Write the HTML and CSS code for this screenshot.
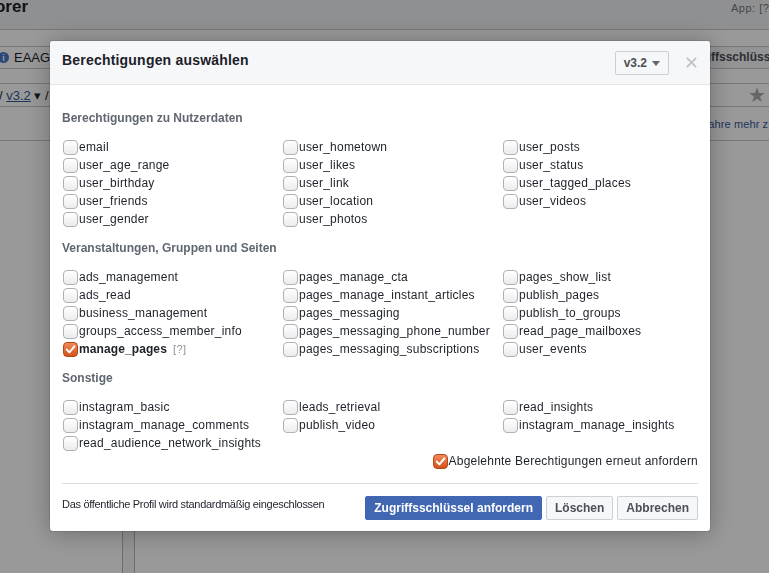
FILE: index.html
```html
<!DOCTYPE html>
<html lang="de">
<head>
<meta charset="utf-8">
<title>Graph API Explorer</title>
<link rel="stylesheet" href="styles.css">
</head>
<body>
<div class="page">
  <div class="bg-row bg-top">
    <div class="bg-brand"><span>Graph API Explorer</span></div>
    <div class="bg-app">App: [?]</div>
  </div>
  <div class="bg-row bg-r2"></div>
  <div class="bg-row bg-r3">
    <span class="bg-info">i</span>
    <span class="bg-token">EAAGmZBZCq</span>
    <span class="bg-btn">Zugriffsschlüssel anfordern</span>
  </div>
  <div class="bg-row bg-r4"></div>
  <div class="bg-row bg-r5">
    <span class="bg-path">/ <u>v3.2</u> ▾ / me?fields=id,name</span>
    <span class="bg-star">★</span>
  </div>
  <div class="bg-row bg-r6">
    <span class="bg-learn">Erfahre mehr zu Zugriffsschlüsseln</span>
  </div>
  <div class="bg-cols">
    <div class="bg-c1"></div>
    <div class="bg-c2"></div>
    <div class="bg-c3"></div>
  </div>
</div>
<div class="overlay"></div>

<div class="modal">
  <div class="m-head">
    <div class="m-title">Berechtigungen auswählen</div>
    <div class="m-ver">v3.2 <span class="caret"></span></div>
    <svg class="m-close" width="12" height="12" viewBox="0 0 12 12"><path d="M1.5 1.5 L10.5 10.5 M10.5 1.5 L1.5 10.5" stroke="#bec3c9" stroke-width="2" stroke-linecap="round"/></svg>
  </div>
  <div class="m-body">
    <div class="sec-title">Berechtigungen zu Nutzerdaten</div>
    <div class="grid">
      <div class="col">
        <div class="item"><span class="cb"></span>email</div>
        <div class="item"><span class="cb"></span>user_age_range</div>
        <div class="item"><span class="cb"></span>user_birthday</div>
        <div class="item"><span class="cb"></span>user_friends</div>
        <div class="item"><span class="cb"></span>user_gender</div>
      </div>
      <div class="col">
        <div class="item"><span class="cb"></span>user_hometown</div>
        <div class="item"><span class="cb"></span>user_likes</div>
        <div class="item"><span class="cb"></span>user_link</div>
        <div class="item"><span class="cb"></span>user_location</div>
        <div class="item"><span class="cb"></span>user_photos</div>
      </div>
      <div class="col">
        <div class="item"><span class="cb"></span>user_posts</div>
        <div class="item"><span class="cb"></span>user_status</div>
        <div class="item"><span class="cb"></span>user_tagged_places</div>
        <div class="item"><span class="cb"></span>user_videos</div>
      </div>
    </div>

    <div class="sec-title">Veranstaltungen, Gruppen und Seiten</div>
    <div class="grid">
      <div class="col">
        <div class="item"><span class="cb"></span>ads_management</div>
        <div class="item"><span class="cb"></span>ads_read</div>
        <div class="item"><span class="cb"></span>business_management</div>
        <div class="item"><span class="cb"></span>groups_access_member_info</div>
        <div class="item item-on"><span class="cb cb-on"><svg viewBox="0 0 15 15" width="15" height="15"><path d="M3.2 7.6 L6.2 10.8 L12 3.8" fill="none" stroke="#fff" stroke-width="2.3" stroke-linecap="round" stroke-linejoin="round"/></svg></span><b>manage_pages</b><span class="help">[?]</span></div>
      </div>
      <div class="col">
        <div class="item"><span class="cb"></span>pages_manage_cta</div>
        <div class="item"><span class="cb"></span>pages_manage_instant_articles</div>
        <div class="item"><span class="cb"></span>pages_messaging</div>
        <div class="item"><span class="cb"></span>pages_messaging_phone_number</div>
        <div class="item"><span class="cb"></span>pages_messaging_subscriptions</div>
      </div>
      <div class="col">
        <div class="item"><span class="cb"></span>pages_show_list</div>
        <div class="item"><span class="cb"></span>publish_pages</div>
        <div class="item"><span class="cb"></span>publish_to_groups</div>
        <div class="item"><span class="cb"></span>read_page_mailboxes</div>
        <div class="item"><span class="cb"></span>user_events</div>
      </div>
    </div>

    <div class="sec-title">Sonstige</div>
    <div class="grid">
      <div class="col">
        <div class="item"><span class="cb"></span>instagram_basic</div>
        <div class="item"><span class="cb"></span>instagram_manage_comments</div>
        <div class="item"><span class="cb"></span>read_audience_network_insights</div>
      </div>
      <div class="col">
        <div class="item"><span class="cb"></span>leads_retrieval</div>
        <div class="item"><span class="cb"></span>publish_video</div>
      </div>
      <div class="col">
        <div class="item"><span class="cb"></span>read_insights</div>
        <div class="item"><span class="cb"></span>instagram_manage_insights</div>
      </div>
    </div>

    <div class="rerequest">
      <div class="item"><span class="cb cb-on"><svg viewBox="0 0 15 15" width="15" height="15"><path d="M3.2 7.6 L6.2 10.8 L12 3.8" fill="none" stroke="#fff" stroke-width="2.3" stroke-linecap="round" stroke-linejoin="round"/></svg></span>Abgelehnte Berechtigungen erneut anfordern</div>
    </div>
  </div>
  <div class="m-foot">
    <div class="foot-note">Das öffentliche Profil wird standardmäßig eingeschlossen</div>
    <div class="foot-btns">
      <span class="btn btn-primary">Zugriffsschlüssel anfordern</span>
      <span class="btn">Löschen</span>
      <span class="btn">Abbrechen</span>
    </div>
  </div>
</div>
</body>
</html>
```

FILE: styles.css
```css
* { box-sizing: border-box; }
html, body { margin: 0; padding: 0; }
body {
  width: 769px;
  height: 573px;
  overflow: hidden;
  font-family: "Liberation Sans", Arial, sans-serif;
  color: #1d2129;
  background: #fff;
}

/* ---------- background page ---------- */
.page { width: 769px; height: 573px; overflow: hidden; display: flex; flex-direction: column; background: #fafafa; }
.bg-row { display: flex; align-items: center; border-bottom: 1px solid #c8c8c8; background: #fff; overflow: hidden; }
.bg-top { height: 30px; justify-content: space-between; align-items: flex-start; background: #eef0f3; }
.bg-brand { width: 28px; overflow: hidden; display: flex; justify-content: flex-end; white-space: nowrap; font-size: 17px; font-weight: bold; line-height: 14px; color: #1d2129; }
.bg-app { width: 38px; overflow: hidden; white-space: nowrap; font-size: 11px; color: #777; line-height: 16px; letter-spacing: 0.5px; }
.bg-r2 { height: 17px; }
.bg-r3 { height: 22px; font-size: 13px; }
.bg-info { flex: none; width: 11px; height: 11px; border-radius: 50%; background: #4a79c9; color: #fff; font-size: 9px; font-weight: bold; display: flex; align-items: center; justify-content: center; margin-left: -2px; }
.bg-token { margin-left: 5px; flex: 1; white-space: nowrap; }
.bg-btn { flex: none; width: 97px; overflow: hidden; white-space: nowrap; font-size: 12px; font-weight: bold; color: #4b4f56; border-left: 1px solid #c8c8c8; padding-left: 8px; line-height: 21px; background: #f6f7f9; }
.bg-r4 { height: 15px; }
.bg-r5 { height: 23px; font-size: 13px; justify-content: space-between; }
.bg-path { margin-left: -1px; white-space: nowrap; }
.bg-path u { color: #365899; }
.bg-star { color: #aaa; font-size: 20px; margin-right: 3px; }
.bg-r6 { height: 34px; font-size: 11px; }
.bg-learn { margin-left: 694px; white-space: nowrap; color: #365899; letter-spacing: 0.1px; }
.bg-cols { flex: 1; display: flex; background: #fff; }
.bg-c1 { width: 123px; border-right: 1px solid #b8b8b8; }
.bg-c2 { width: 12px; border-right: 1px solid #b8b8b8; background: #f6f6f6; }
.bg-c3 { flex: 1; }

.overlay { position: fixed; inset: 0; background: rgba(0, 0, 0, 0.4); }

/* ---------- modal ---------- */
.modal {
  position: fixed;
  left: 50px;
  top: 41px;
  width: 660px;
  background: #fff;
  border-radius: 3px;
  box-shadow: 0 2px 26px rgba(0, 0, 0, 0.3), 0 0 0 1px rgba(0, 0, 0, 0.1);
}
.m-head {
  display: flex;
  align-items: flex-start;
  padding: 10px 12px 9px;
  background: #f6f7f9;
  border-bottom: 1px solid #e5e5e5;
  border-radius: 3px 3px 0 0;
}
.m-title { flex: 1; font-size: 14px; font-weight: bold; line-height: 19px; letter-spacing: 0.2px; color: #1d2129; }
.m-ver {
  display: flex;
  align-items: center;
  height: 24px;
  padding: 0 8px;
  border: 1px solid #ccd0d5;
  border-radius: 2px;
  background: #f6f7f9;
  font-size: 12px;
  font-weight: bold;
  color: #4b4f56;
}
.caret { width: 0; height: 0; margin-left: 5px; border-left: 4.5px solid transparent; border-right: 4.5px solid transparent; border-top: 5px solid #606770; }
.m-close { margin: 6px 1px 0 17px; width: 11px; height: 11px; }

.m-body { padding: 13px 12px 13px; }
.sec-title { font-size: 12px; font-weight: bold; line-height: 16px; color: #606770; margin: 12px 0; }
.grid { display: grid; grid-template-columns: 220px 220px 196px; }
.item { display: flex; align-items: center; height: 18px; font-size: 12px; line-height: 18px; letter-spacing: 0.22px; white-space: nowrap; color: #1d2129; }
.cb {
  flex: none;
  width: 15px;
  height: 15px;
  margin: 1px 1px 0 1px;
  border: 1px solid #aeb1b5;
  border-radius: 4px;
  background: linear-gradient(#ffffff, #ececec);
  display: flex;
  align-items: center;
  justify-content: center;
}
.cb-on { border-color: #b5481a; background: linear-gradient(#f08a58, #d4531c); }
.cb-on svg { display: block; }
.item b { font-weight: bold; letter-spacing: 0.1px; }
.help { margin-left: 6px; font-size: 11px; letter-spacing: 0.5px; color: #90949c; }
.rerequest { display: flex; justify-content: flex-end; }

.m-foot {
  margin: 0 12px;
  padding: 12px 0 11px;
  border-top: 1px solid #dddfe2;
  display: flex;
  align-items: center;
  justify-content: space-between;
}
.foot-note { font-size: 11px; letter-spacing: -0.3px; color: #1d2129; margin-top: -9px; }
.foot-btns { display: flex; gap: 4px; }
.btn {
  display: flex;
  align-items: center;
  height: 24px;
  padding: 0 8px;
  border: 1px solid #ccd0d5;
  border-radius: 2px;
  background: #f6f7f9;
  font-size: 12px;
  font-weight: bold;
  color: #4b4f56;
}
.btn-primary { background: #4267b2; border-color: #4267b2; color: #fff; }
```
